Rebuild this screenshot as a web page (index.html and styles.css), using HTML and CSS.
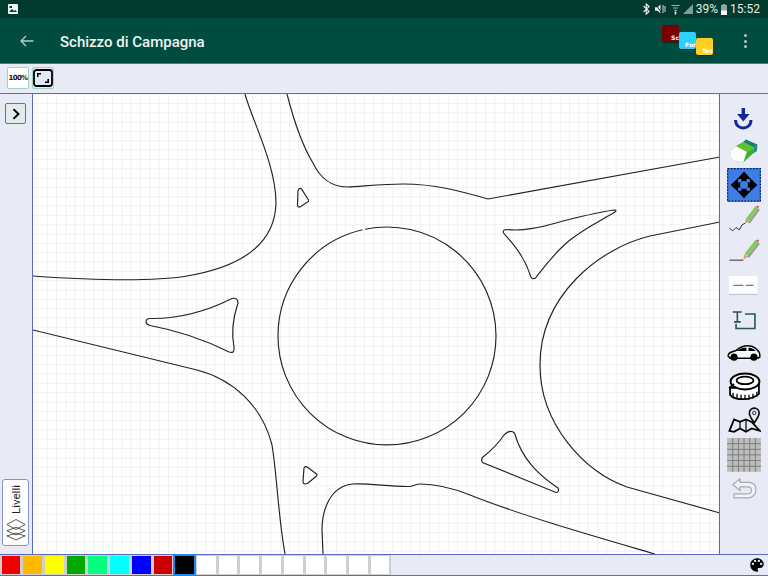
FILE: index.html
```html
<!DOCTYPE html>
<html lang="it">
<head>
<meta charset="utf-8">
<title>Schizzo di Campagna</title>
<link rel="stylesheet" href="styles.css">
</head>
<body>
<div class="app">
  <div class="statusbar">
    <svg class="st-image" viewBox="0 0 10 10"><rect width="10" height="10" rx="1" fill="#f2f6f5"/><path d="M1 8 L4 5 L6 7 L7.5 6 L9 8 Z M1.5 2 h2.5 v2 h-2.5 Z" fill="#00392e"/></svg>
    <div class="st-right">
      <svg class="st-bt" viewBox="0 0 7 12"><path d="M0.6 3 L6 8.4 L3.3 11 V1 L6 3.6 L0.6 9" fill="none" stroke="#e4ecea" stroke-width="1.2"/></svg>
      <svg class="st-mute" viewBox="0 0 11 10"><path d="M0 3.2 H2.5 L5.5 0.5 V9.5 L2.5 6.8 H0 Z" fill="#e4ecea"/><path d="M1 0.5 L7 9.5" stroke="#00392e" stroke-width="1"/><path d="M8 1 V9 M10 2 V8" stroke="#cfdbd8" stroke-width="1"/></svg>
      <svg class="st-wifi" viewBox="0 0 9 11"><path d="M0.5 1.5 H8.5 M2 4 H7 M3.3 6.4 H5.7" stroke="#9fb3ae" stroke-width="1.2"/><path d="M4.5 7.5 V10.5" stroke="#e4ecea" stroke-width="1.6"/></svg>
      <svg class="st-signal" viewBox="0 0 10 10"><path d="M0 10 L10 0 V10 Z" fill="#7f9a94"/></svg>
      <span class="st-pct">39%</span>
      <svg class="st-batt" viewBox="0 0 6 11"><path d="M1.7 0 H4.3 V1 H6 V11 H0 V1 H1.7 Z" fill="#8ea5a0"/><rect y="6.5" width="6" height="4.5" fill="#f2f6f5"/></svg>
      <span class="st-time">15:52</span>
    </div>
  </div>

  <header class="appbar">
    <svg class="back" viewBox="0 0 14 12"><path d="M13.5 6 H1 M6 1 L1 6 L6 11" fill="none" stroke="#b7cdc8" stroke-width="1.3"/></svg>
    <h1 class="title">Schizzo di Campagna</h1>
    <div class="tiles">
      <div class="tile tile-sc">Sc</div>
      <div class="tile tile-for">For</div>
      <div class="tile tile-tec">Tec</div>
    </div>
    <div class="dots"><i></i><i></i><i></i></div>
  </header>

  <div class="toolbar">
    <div class="tb-btn tb-zoom">100%</div>
    <div class="tb-btn tb-fit">
      <svg viewBox="0 0 20 18" width="20" height="18"><rect x="1" y="1" width="18" height="16" rx="2.5" fill="none" stroke="#000" stroke-width="1.8"/><path d="M4.8 8 V4.8 H8 M15.2 10 V13.2 H12" fill="none" stroke="#000" stroke-width="1.6"/></svg>
    </div>
  </div>

  <div class="workspace">
    <aside class="leftpanel">
      <div class="chevron">
        <svg viewBox="0 0 10 12" width="10" height="12"><path d="M2.5 1.2 L7.5 6 L2.5 10.8" fill="none" stroke="#000" stroke-width="1.9"/></svg>
      </div>
      <div class="layers">
        <span class="layers-label">Livelli</span>
        <svg class="layers-icon" viewBox="0 0 22 24" width="20" height="23">
          <path d="M11 16 L21 19 L11 23.5 L1 19 Z M11 9.5 L21 13.5 L11 18 L1 13.5 Z M11 1 L21 6.5 L11 12 L1 6.5 Z" fill="none" stroke="#333" stroke-width="0.9"/>
        </svg>
      </div>
    </aside>

    <main class="canvas">
      <svg class="sketch" viewBox="33 94 687 460" preserveAspectRatio="none">
        <g fill="none" stroke="#222" stroke-width="1.15">
          <path d="M245 94 C252 120 276 165 276 203 C275 245 240 267 187 276 C150 282 90 280 33 276"/>
          <path d="M287 94 C295 125 305 150 313 163 C320 178 332 187 347 187 C365 186 385 184 403 184 C435 184 460 191 488 199 L720 157"/>
          <path d="M365 229.24 A109 109 0 0 1 496 336 A109 109 0 0 1 278 336 A109 109 0 0 1 362.5 229.8"/>
          <path d="M720 222 L650 236 C600 248 540 295 540 365 C540 425 585 472 627 487 L720 513"/>
          <path d="M655 554 C590 535 520 515 470 495 C450 487 435 484 420 484 C416 484 414 486 410 486.5 C390 487 370 483 353 484 C330 486 322 510 322 530 L323 554"/>
          <path d="M33 330 L197 370 C232 379 262 405 272 445 C277 475 278 515 285 554"/>
          <path d="M150 318.5 C180 319 205 312 232 298.5 Q238 297 238 303 C233 318 231 332 234 347 Q235 354 229 352 C205 340 180 331 150 325.5 Q146 324 146 322 Q146 318.5 150 318.5 Z"/>
          <path d="M298 191 Q299 187 301.5 189 L308.5 200 Q309 201.5 307.5 202 L300 207 Q297.5 207.5 297.5 204.5 Z"/>
          <path d="M506 229.5 C530 232 550 224 575 218 C590 214.5 605 211 615 210 Q617 210.5 615 212 C600 221 585 228 570 240 C555 252 545 266 535.5 278 Q532 280 530.5 276 C524 255 512 243 503.5 233 Q502.5 230 506 229.5 Z"/>
          <path d="M482.5 462.5 Q480.5 459.5 483 457 C492 450 498 444 504 435 Q510 429 514.5 433 C522 460 540 476 558 488 Q559.5 492 556 492.5 Z"/>
          <path d="M304 468 Q305 465.5 308 467.5 L316.5 474 Q317.5 475 316.5 476 L307.5 483.5 Q303 485 303 481.5 Z"/>
        </g>
      </svg>
    </main>

    <aside class="tools">
      <svg class="tool" viewBox="0 0 34 34"><path d="M14.6 7 H18 V13 H22.6 L16.3 20.5 L10 13 H14.6 Z" fill="#14289c"/><path d="M8.5 19 C8.5 30 24 30 24 19" fill="none" stroke="#14289c" stroke-width="3"/></svg>
      <svg class="tool" viewBox="0 0 34 34"><path d="M3 17 L9 12 L20 18 L16.5 28.5 L7 27 Q3 24 3 21 Z" fill="#fff" stroke="#c6cad0" stroke-width="0.5"/><path d="M9 12 L16 8 L27 13.5 L20 18 Z" fill="#5ec22c"/><path d="M20 18 L27 13.5 L26 19.5 L16.5 28.5 Z" fill="#3fae2c"/><path d="M16 8 L19 5.5 L30.5 10.5 L27 13.5 Z" fill="#17806f"/><path d="M27 13.5 L30.5 10.5 L30 17 L26 19.5 Z" fill="#1d8f7c"/></svg>
      <svg class="tool" viewBox="0 0 34 34"><rect width="34" height="34" fill="#3f7de6"/><rect x="0.6" y="0.6" width="32.8" height="32.8" fill="none" stroke="#0a1440" stroke-width="1.2" stroke-dasharray="1.6 1.6"/><path d="M17 3.5 L24 11 H19.5 V14.5 H23 V10 L30.5 17 L23 24 V19.5 H19.5 V23 H24 L17 30.5 L10 23 H14.5 V19.5 H11 V24 L3.5 17 L11 10 V14.5 H14.5 V11 H10 Z" fill="#000"/><circle cx="17" cy="17" r="4" fill="#3f7de6"/></svg>
      <svg class="tool" viewBox="0 0 34 34"><path d="M2.3 26.4 L5.7 29 L9 25.7 L12.3 28 L15 23 L18 21.4" fill="none" stroke="#333" stroke-width="1"/><path d="M32 7 L22 21" stroke="#9a9a9a" stroke-width="2.4"/><path d="M30 5 L20 18.5" stroke="#84cc58" stroke-width="3.6"/><path d="M18 21.6 L18.6 17.5 L21.6 19.8 Z" fill="#c8a060"/><path d="M30 4.2 L31.6 5.4" stroke="#d8566a" stroke-width="2.4"/></svg>
      <svg class="tool" viewBox="0 0 34 34"><path d="M2.3 24.3 H16.3" stroke="#333" stroke-width="1"/><path d="M32 7 L21 21.5" stroke="#9a9a9a" stroke-width="2.4"/><path d="M30 5 L19 19" stroke="#84cc58" stroke-width="3.6"/><path d="M16.5 23.7 L17.2 18.5 L20.5 21 Z" fill="#c8a060"/><path d="M30 4.2 L31.6 5.4" stroke="#d8566a" stroke-width="2.4"/></svg>
      <svg class="tool" viewBox="0 0 34 34"><rect x="2" y="7.2" width="28.5" height="18" fill="#fff"/><rect x="2" y="25" width="28.5" height="1.2" fill="#c4c6cf"/><path d="M6.3 16.5 H16.3 M18.7 16.5 H26.5" stroke="#777" stroke-width="1.4"/></svg>
      <svg class="tool" viewBox="0 0 34 34"><path d="M5.7 9 H14.7 M10.3 9 V19 M7 19 H13.7 M18 11 H28 V25.7 H9 V21" fill="none" stroke="#2a5554" stroke-width="1.6"/></svg>
      <svg class="tool" viewBox="0 0 34 34"><path d="M1 19 C1 15.5 5 14.7 9 13.7 C13 10.2 18 8.3 23 9 C27 9.5 29.5 11.7 31 14 C33 15 33 18 33 20 L31 21.3 H3 Z" fill="#fff" stroke="#000" stroke-width="1.5"/><path d="M9.5 14 C13 11.5 16.5 10.5 19.5 10.5 V14 Z M21.5 10.5 C25 10.8 27.5 12.3 28.8 14 H21.5 Z" fill="#000"/><circle cx="7" cy="20.3" r="3.6" fill="#000"/><circle cx="27" cy="20.3" r="3.6" fill="#000"/></svg>
      <svg class="tool" viewBox="0 0 34 34"><path d="M3 17 V24 C8 30 24 30 32 23 V11 H3" fill="#fff" stroke="#000" stroke-width="1.8"/><ellipse cx="18" cy="10.5" rx="14.5" ry="8" fill="#fff" stroke="#000" stroke-width="2"/><ellipse cx="18" cy="9.5" rx="8.5" ry="3.8" fill="#fff" stroke="#000" stroke-width="1.8"/><path d="M2 17 L7 13 M2 17 H9" stroke="#000" stroke-width="1.6"/><path d="M6 22 V27 M10 23 V28 M14 24 V29 M18 24 V29 M22 24 V29 M26 23 V28 M30 21 V26" stroke="#000" stroke-width="1.3"/></svg>
      <svg class="tool" viewBox="0 0 34 34"><path d="M2.3 26 L7 14.6 L13 17 L19 14.6 L24.7 17 L33 26 L24.7 23.6 L19 27 L13 23.6 L7 27 Z" fill="none" stroke="#000" stroke-width="1.8"/><path d="M13 17 V23.6 M19 14.6 V27" stroke="#000" stroke-width="1.2"/><path d="M27.3 18 C24 13 22.4 11 22.4 8 A4.9 4.9 0 0 1 32.2 8 C32.2 11 30.6 13 27.3 18 Z" fill="#e8eaf6" stroke="#000" stroke-width="1.6"/><circle cx="27.3" cy="8" r="1.7" fill="#e8eaf6" stroke="#000" stroke-width="0.8"/></svg>
      <svg class="tool" viewBox="0 0 34 34"><rect width="34" height="34" fill="#bdbdbd"/><path d="M0 5.7 H34 M0 11.4 H34 M0 17 H34 M0 22.7 H34 M0 28.4 H34 M5.7 0 V34 M11.4 0 V34 M17 0 V34 M22.7 0 V34 M28.4 0 V34" stroke="#7d7d7d" stroke-width="1"/></svg>
      <svg class="tool" viewBox="0 0 34 34"><path d="M5.7 12.6 L13 6.9 V10.5 H21 C27 10.5 29 14 29 17.5 C29 22 26 26 21 26 H7 V22 H20 C23 22 24.5 20 24.5 18 C24.5 16 23 15 20.5 15 H13 V18.5 Z" fill="#f2f3fa" stroke="#a9a9a9" stroke-width="1.2"/></svg>
    </aside>
  </div>

  <footer class="colorbar">
    <div class="swatches">
      <div class="swatch c-red"></div>
      <div class="swatch c-orange"></div>
      <div class="swatch c-yellow"></div>
      <div class="swatch c-green"></div>
      <div class="swatch c-spring"></div>
      <div class="swatch c-cyan"></div>
      <div class="swatch c-blue"></div>
      <div class="swatch c-darkred"></div>
      <div class="swatch c-black is-selected"></div>
      <div class="swatch"></div>
      <div class="swatch"></div>
      <div class="swatch"></div>
      <div class="swatch"></div>
      <div class="swatch"></div>
      <div class="swatch"></div>
      <div class="swatch"></div>
      <div class="swatch"></div>
      <div class="swatch"></div>
    </div>
    <svg class="palette" viewBox="0 0 24 24"><path d="M12 3c-4.97 0-9 4.03-9 9s4.03 9 9 9c.83 0 1.5-.67 1.5-1.5 0-.39-.15-.74-.39-1.01-.23-.26-.38-.61-.38-.99 0-.83.67-1.5 1.5-1.5H16c2.76 0 5-2.24 5-5 0-4.42-4.03-8-9-8zm-5.5 9c-.83 0-1.5-.67-1.5-1.5S5.67 9 6.5 9 8 9.67 8 10.5 7.33 12 6.5 12zm3-4C8.67 8 8 7.33 8 6.5S8.67 5 9.5 5s1.5.67 1.5 1.5S10.33 8 9.5 8zm5 0c-.83 0-1.5-.67-1.5-1.5S13.67 5 14.5 5s1.5.67 1.5 1.5S15.33 8 14.5 8zm3 4c-.83 0-1.5-.67-1.5-1.5S16.67 9 17.5 9s1.5.67 1.5 1.5-.67 1.5-1.5 1.5z" fill="#000"/></svg>
  </footer>
</div>
</body>
</html>
```
FILE: styles.css
```css
* { box-sizing: border-box; }
html, body { margin: 0; padding: 0; }
body { font-family: Roboto, "Liberation Sans", sans-serif; background: #fff; overflow: hidden; }
.app { width: 768px; height: 576px; display: flex; flex-direction: column; }

.statusbar { height: 18px; flex: none; background: #003a2f; display: flex; align-items: center; justify-content: space-between; padding: 0 8px; color: #e4ecea; font-size: 12px; }
.st-image { width: 10px; height: 10px; }
.st-right { display: flex; align-items: center; }
.st-bt { width: 7px; height: 12px; margin-right: 5px; }
.st-mute { width: 11px; height: 10px; margin-right: 5px; }
.st-wifi { width: 9px; height: 11px; margin-right: 3px; }
.st-signal { width: 10px; height: 10px; margin-right: 3px; }
.st-pct { margin-right: 3px; }
.st-batt { width: 6px; height: 11px; margin-right: 3px; }

.appbar { height: 46px; flex: none; background: #004d40; display: flex; align-items: center; padding: 0 21px 0 20px; border-bottom: 1px solid #5c6bc0; }
.back { width: 14px; height: 12px; margin-right: 26px; }
.title { margin: 0; padding-top: 2px; font-size: 15px; font-weight: 500; color: #eef4f2; flex: 1; }
.tiles { display: flex; align-items: flex-start; align-self: flex-start; margin-right: 31px; }
.tile { width: 17px; height: 17px; border-radius: 2px; font: bold 6px "DejaVu Sans", sans-serif; color: #fff; display: flex; align-items: flex-end; justify-content: flex-end; padding: 0 0 1px 0; box-shadow: 0 1px 0 rgba(0,0,0,.4); }
.tile-sc { background: #7d0000; margin-top: 7px; }
.tile-for { background: #2dd0ff; margin-top: 14px; }
.tile-tec { background: #ffd024; margin-top: 20px; }
.dots { display: flex; flex-direction: column; gap: 2.5px; padding-top: 1px; }
.dots i { width: 3px; height: 3px; border-radius: 50%; background: #b4c6c2; display: block; }

.toolbar { height: 30px; flex: none; background: #e8eaf6; border-bottom: 1px solid #5c6bc0; display: flex; align-items: center; gap: 3px; padding: 0 0 1px 7px; }
.tb-btn { width: 22px; height: 22px; border: 1.5px solid #a5d0c8; border-radius: 2px; display: flex; align-items: center; justify-content: center; }
.tb-zoom { background: #fff; font: bold 7px "DejaVu Sans", sans-serif; color: #111; letter-spacing: -0.7px; }
.tb-fit { background: #e4eaf2; }

.workspace { flex: 1; min-height: 0; display: flex; }

.leftpanel { width: 33px; flex: none; background: #e8eaf6; border-right: 1px solid #5c6bc0; display: flex; flex-direction: column; align-items: center; justify-content: space-between; padding: 9px 1px 8px 0; }
.chevron { width: 21px; height: 21px; background: #e3ecec; border: 1.5px solid #3f8a70; border-radius: 2px; display: flex; align-items: center; justify-content: center; }
.layers { width: 27px; height: 67px; background: #fff; border: 1px solid #8a93cf; border-radius: 3px; display: flex; flex-direction: column; align-items: center; justify-content: space-between; padding: 5px 0 4px; }
.layers-label { writing-mode: vertical-rl; transform: rotate(180deg); font: 11.5px Roboto, sans-serif; color: #222; }
.layers-icon { display: block; }

.canvas { flex: 1; min-width: 0; background-color: #fff; background-image: linear-gradient(to right, #f0f0f0 1px, transparent 1px), linear-gradient(to bottom, #f0f0f0 1px, transparent 1px); background-size: 9.33px 9.33px; background-position: 4.4px 9px; }
.sketch { display: block; width: 100%; height: 100%; }

.tools { width: 49px; flex: none; background: #e8eaf6; border-left: 1px solid #5c6bc0; display: flex; flex-direction: column; align-items: flex-start; padding: 6.5px 0 0 7px; margin-left: -1px; }
.tool { width: 34px; height: 33.8px; flex: none; display: block; }

.colorbar { height: 22px; flex: none; background: #e8eaf6; border-top: 1px solid #5c6bc0; border-bottom: 1px solid #5c6bc0; display: flex; align-items: stretch; justify-content: space-between; padding-right: 2px; }
.swatches { width: 391px; display: grid; grid-template-columns: repeat(18, 1fr); background: #cfcfcf; }
.swatch { background: #fff; margin: 1px 1.5px; }
.c-red { background: #ee0000; }
.c-orange { background: #ffba00; }
.c-yellow { background: #ffff00; }
.c-green { background: #00aa00; }
.c-spring { background: #00ff80; }
.c-cyan { background: #00ffff; }
.c-blue { background: #0000ff; }
.c-darkred { background: #cc0000; }
.c-black { background: #000; }
.is-selected { outline: 2px solid #1e88e5; outline-offset: 0; }
.palette { width: 18px; height: 18px; align-self: center; }
```
